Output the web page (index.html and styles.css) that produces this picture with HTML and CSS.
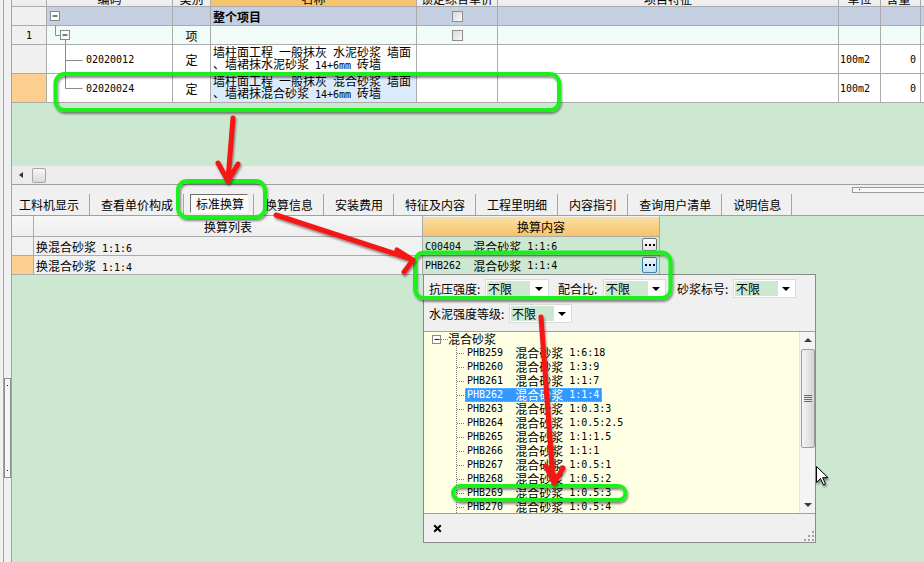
FILE: index.html
```html
<!DOCTYPE html>
<html lang="zh-CN">
<head>
<meta charset="utf-8">
<title>标准换算</title>
<link rel="stylesheet" href="styles.css">
</head>
<body>
<div class="app">
  <aside class="lstrip"><div class="lthumb"><i></i><i></i></div></aside>
  <div class="main">
    <section class="top">
      <div class="thead-clip">
        <div class="tr thead">
          <div class="c w-num"></div>
          <div class="c w-code">编码</div>
          <div class="c w-type">类别</div>
          <div class="c w-name hdr-or">名称</div>
          <div class="c w-lock">锁定综合单价</div>
          <div class="c w-feat">项目特征</div>
          <div class="c w-unit">单位</div>
          <div class="c w-qty">含量</div>
          <div class="c w-rest"></div>
        </div>
      </div>
      <div class="tr r1">
        <div class="c w-num gray"></div>
        <div class="c w-code"><svg width="20" height="18" viewBox="0 0 20 18"><rect class="mbox" x="3.5" y="4.5" width="9" height="9"/><path class="mminus" d="M5.5 9h5"/></svg></div>
        <div class="c w-type"></div>
        <div class="c w-name"><b>整个项目</b></div>
        <div class="c w-lock ctr"><span class="chk"></span></div>
        <div class="c w-feat"></div>
        <div class="c w-unit"></div>
        <div class="c w-qty"></div>
        <div class="c w-rest"></div>
      </div>
      <div class="tr r2">
        <div class="c w-num gray ctr"><span class="m">1</span></div>
        <div class="c w-code"><svg width="30" height="18" viewBox="0 0 30 18"><path class="tline" d="M8.5 0v9.5h5M18.5 14v4"/><rect class="mbox" x="13.5" y="4.5" width="9" height="9"/><path class="mminus" d="M15.5 9h5"/></svg></div>
        <div class="c w-type ctr">项</div>
        <div class="c w-name"></div>
        <div class="c w-lock ctr"><span class="chk"></span></div>
        <div class="c w-feat"></div>
        <div class="c w-unit"></div>
        <div class="c w-qty"></div>
        <div class="c w-rest"></div>
      </div>
      <div class="tr r3">
        <div class="c w-num gray"></div>
        <div class="c w-code"><svg width="39" height="28" viewBox="0 0 39 28"><path class="tline" d="M18.5 0v28M18.5 15.5h17"/></svg><span class="m">02020012</span></div>
        <div class="c w-type ctr">定</div>
        <div class="c w-name two"><span>墙柱面工程 一般抹灰 水泥砂浆 墙面</span><span>、墙裙抹水泥砂浆 <span class="m">14+6mm</span> 砖墙</span></div>
        <div class="c w-lock"></div>
        <div class="c w-feat"></div>
        <div class="c w-unit"><span class="m">100m2</span></div>
        <div class="c w-qty"><span class="m">0</span></div>
        <div class="c w-rest"></div>
      </div>
      <div class="tr r3">
        <div class="c w-num or"></div>
        <div class="c w-code"><svg width="39" height="28" viewBox="0 0 39 28"><path class="tline" d="M18.5 0v14.5h17"/></svg><span class="m">02020024</span></div>
        <div class="c w-type ctr">定</div>
        <div class="c w-name two hl"><span>墙柱面工程 一般抹灰 混合砂浆 墙面</span><span>、墙裙抹混合砂浆 <span class="m">14+6mm</span> 砖墙</span></div>
        <div class="c w-lock"></div>
        <div class="c w-feat"></div>
        <div class="c w-unit"><span class="m">100m2</span></div>
        <div class="c w-qty"><span class="m">0</span></div>
        <div class="c w-rest"></div>
      </div>
      <div class="fill"></div>
      <div class="hscroll"><i class="larr"></i><span class="hthumb"></span></div>
    </section>

    <nav class="tabbar">
      <span class="tab t1">工料机显示</span><i class="sep"></i>
      <span class="tab">查看单价构成</span><i class="sep"></i>
      <span class="tab on">标准换算</span><i class="sep"></i>
      <span class="tab">换算信息</span><i class="sep"></i>
      <span class="tab">安装费用</span><i class="sep"></i>
      <span class="tab">特征及内容</span><i class="sep"></i>
      <span class="tab">工程里明细</span><i class="sep"></i>
      <span class="tab">内容指引</span><i class="sep"></i>
      <span class="tab">查询用户清单</span><i class="sep"></i>
      <span class="tab">说明信息</span><i class="sep"></i>
      <span class="minibar"><i></i></span>
    </nav>

    <section class="bottom">
      <div class="lgrid">
        <div class="gr gh"><div class="gc gn"></div><div class="gc gt ctr">换算列表</div></div>
        <div class="gr"><div class="gc gn"></div><div class="gc gt"><span>换混合砂浆 <span class="m">1:1:6</span></span></div></div>
        <div class="gr"><div class="gc gn or"></div><div class="gc gt"><span>换混合砂浆 <span class="m">1:1:4</span></span></div></div>
      </div>
      <div class="rgrid">
        <div class="rh">换算内容</div>
        <div class="rr"><span class="m">C00404</span><span class="nm">混合砂浆</span><span class="m r6">1:1:6</span><span class="dots"><svg width="10" height="2" viewBox="0 0 10 2"><rect x="0" y="0" width="2" height="2"/><rect x="4" y="0" width="2" height="2"/><rect x="8" y="0" width="2" height="2"/></svg></span></div>
        <div class="rr"><span class="m">PHB262</span><span class="nm">混合砂浆</span><span class="m r6">1:1:4</span><span class="dots hot"><svg width="10" height="2" viewBox="0 0 10 2"><rect x="0" y="0" width="2" height="2"/><rect x="4" y="0" width="2" height="2"/><rect x="8" y="0" width="2" height="2"/></svg></span></div>
      </div>
    </section>
  </div>

  <div class="popup">
    <div class="filters">
      <div class="frow">
        <span class="lbl l1">抗压强度:</span><span class="sel w64"><span class="v">不限</span><span class="arr"></span></span>
        <span class="lbl l2">配合比:</span><span class="sel"><span class="v">不限</span><span class="arr"></span></span>
        <span class="lbl l3">砂浆标号:</span><span class="sel"><span class="v">不限</span><span class="arr"></span></span>
      </div>
      <div class="frow">
        <span class="lbl l4">水泥强度等级:</span><span class="sel"><span class="v">不限</span><span class="arr"></span></span>
      </div>
    </div>
    <div class="treebox">
      <div class="tree">
        <div class="tn"><svg width="24" height="14" viewBox="0 0 24 14"><rect class="mbox" x="8.5" y="3.5" width="8" height="8"/><path class="mminus2" d="M10.5 7.5h5"/><path class="dot" d="M17 7.5h7"/></svg>混合砂浆</div>
        <div class="tn"><svg width="41" height="14" viewBox="0 0 41 14"><path class="dot" d="M32.5 0v14M33 7.5h8"/></svg><span class="item"><span class="m">PHB259</span><span class="nm">混合砂浆</span><span class="m r6">1:6:18</span></span></div>
        <div class="tn"><svg width="41" height="14" viewBox="0 0 41 14"><path class="dot" d="M32.5 0v14M33 7.5h8"/></svg><span class="item"><span class="m">PHB260</span><span class="nm">混合砂浆</span><span class="m r6">1:3:9</span></span></div>
        <div class="tn"><svg width="41" height="14" viewBox="0 0 41 14"><path class="dot" d="M32.5 0v14M33 7.5h8"/></svg><span class="item"><span class="m">PHB261</span><span class="nm">混合砂浆</span><span class="m r6">1:1:7</span></span></div>
        <div class="tn"><svg width="41" height="14" viewBox="0 0 41 14"><path class="dot" d="M32.5 0v14M33 7.5h8"/></svg><span class="item cur"><span class="m">PHB262</span><span class="nm">混合砂浆</span><span class="m r6">1:1:4</span></span></div>
        <div class="tn"><svg width="41" height="14" viewBox="0 0 41 14"><path class="dot" d="M32.5 0v14M33 7.5h8"/></svg><span class="item"><span class="m">PHB263</span><span class="nm">混合砂浆</span><span class="m r6">1:0.3:3</span></span></div>
        <div class="tn"><svg width="41" height="14" viewBox="0 0 41 14"><path class="dot" d="M32.5 0v14M33 7.5h8"/></svg><span class="item"><span class="m">PHB264</span><span class="nm">混合砂浆</span><span class="m r6">1:0.5:2.5</span></span></div>
        <div class="tn"><svg width="41" height="14" viewBox="0 0 41 14"><path class="dot" d="M32.5 0v14M33 7.5h8"/></svg><span class="item"><span class="m">PHB265</span><span class="nm">混合砂浆</span><span class="m r6">1:1:1.5</span></span></div>
        <div class="tn"><svg width="41" height="14" viewBox="0 0 41 14"><path class="dot" d="M32.5 0v14M33 7.5h8"/></svg><span class="item"><span class="m">PHB266</span><span class="nm">混合砂浆</span><span class="m r6">1:1:1</span></span></div>
        <div class="tn"><svg width="41" height="14" viewBox="0 0 41 14"><path class="dot" d="M32.5 0v14M33 7.5h8"/></svg><span class="item"><span class="m">PHB267</span><span class="nm">混合砂浆</span><span class="m r6">1:0.5:1</span></span></div>
        <div class="tn"><svg width="41" height="14" viewBox="0 0 41 14"><path class="dot" d="M32.5 0v14M33 7.5h8"/></svg><span class="item"><span class="m">PHB268</span><span class="nm">混合砂浆</span><span class="m r6">1:0.5:2</span></span></div>
        <div class="tn"><svg width="41" height="14" viewBox="0 0 41 14"><path class="dot" d="M32.5 0v14M33 7.5h8"/></svg><span class="item"><span class="m">PHB269</span><span class="nm">混合砂浆</span><span class="m r6">1:0.5:3</span></span></div>
        <div class="tn"><svg width="41" height="14" viewBox="0 0 41 14"><path class="dot" d="M32.5 0v14M33 7.5h8"/></svg><span class="item"><span class="m">PHB270</span><span class="nm">混合砂浆</span><span class="m r6">1:0.5:4</span></span></div>
      </div>
      <div class="vscroll">
        <span class="vb up"></span>
        <span class="vthumb"><svg width="8" height="8" viewBox="0 0 8 8"><path d="M0 0.5h8M0 2.5h8M0 4.5h8M0 6.5h8" stroke="#6a6a6a" stroke-width="1"/></svg></span>
        <span class="vgap"></span>
        <span class="vb dn"></span>
      </div>
    </div>
    <div class="pfoot">
      <svg width="9" height="9" viewBox="0 0 9 9"><path d="M1.2 1.2L7.8 7.8M7.8 1.2L1.2 7.8" stroke="#000" stroke-width="2"/></svg>
      <svg class="grip" width="11" height="11" viewBox="0 0 11 11"><g fill="#a3a3a3"><rect x="9" y="1" width="2" height="2"/><rect x="9" y="5" width="2" height="2"/><rect x="5" y="5" width="2" height="2"/><rect x="9" y="9" width="2" height="2"/><rect x="5" y="9" width="2" height="2"/><rect x="1" y="9" width="2" height="2"/></g></svg>
    </div>
  </div>

  <svg class="overlay" width="924" height="562" viewBox="0 0 924 562">
    <defs>
      <filter id="sh" x="-20%" y="-20%" width="140%" height="160%">
        <feDropShadow dx="1" dy="2" stdDeviation="1.2" flood-color="#000" flood-opacity="0.45"/>
      </filter>
    </defs>
    <g fill="none" stroke="#1ef01e" stroke-width="4" filter="url(#sh)">
      <rect x="55.5" y="74" width="503.5" height="36" rx="9"/>
      <rect x="178" y="181" width="87" height="36" rx="9"/>
      <rect x="415" y="252.5" width="255.5" height="45.5" rx="9"/>
      <rect x="453" y="486" width="172.5" height="14" rx="7"/>
    </g>
    <g fill="none" stroke="#f51414" stroke-width="5" stroke-linecap="round" stroke-linejoin="round" filter="url(#sh)">
      <path d="M233 118L228 180M218 163L228 181L238 164"/>
      <path d="M276 215L411 259M397 250L413 260L404 272"/>
      <path d="M541 317L553 480M546 466L554 483L563 468"/>
    </g>
    <path d="M816.5 466.5V482.5L820.5 478.5L823.5 485L825.5 484L822.7 477.7H828Z" fill="#fff" stroke="#000" stroke-width="1" filter="url(#sh)"/>
  </svg>
</div>
</body>
</html>
```

FILE: styles.css
```css
* { box-sizing: border-box; }
html, body { margin: 0; padding: 0; }
body {
  width: 924px;
  height: 562px;
  overflow: hidden;
  background: #f0f0f0;
  font-family: "Noto Sans CJK SC", "Noto Sans", sans-serif;
  font-size: 12px;
  color: #000;
  word-spacing: 3.3px;
}
.m {
  font-family: "DejaVu Sans Mono", "Liberation Mono", monospace;
  font-size: 10px;
  word-spacing: 0;
}
.app { position: relative; display: flex; width: 924px; height: 562px; }

/* left strip */
.lstrip {
  flex: none;
  width: 9px;
  margin-left: 3px;
  border-left: 1px solid #a3a3a3;
  border-right: 1px solid #a3a3a3;
  background: #f0f0f0;
  display: flex;
  flex-direction: column;
}
.lthumb {
  margin-top: 378px;
  height: 100px;
  border: 1px solid #8d8d8d;
  background: #f5f5f5;
  display: flex;
  flex-direction: column;
  justify-content: space-between;
  align-items: center;
  padding: 6px 0;
}
.lthumb i { display: block; width: 1px; height: 1px; background: #00007a; }

.main { flex: 1; min-width: 0; display: flex; flex-direction: column; }

/* top grid */
.top {
  flex: none;
  height: 185px;
  display: flex;
  flex-direction: column;
  background: #cde8d0;
  border-bottom: 1px solid #a0a0a0;
}
.thead-clip {
  flex: none;
  height: 7px;
  overflow: hidden;
  display: flex;
  flex-direction: column;
  justify-content: flex-end;
}
.tr { display: flex; flex: none; }
.thead { height: 21px; background: linear-gradient(#fafafa, #ebebeb); }
.thead .c { justify-content: center; align-items: flex-end; line-height: 14px; padding-left: 0; }
.thead .hdr-or { background: #f6c46c; }
.c {
  flex: none;
  display: flex;
  align-items: center;
  border-right: 1px solid #ababab;
  border-bottom: 1px solid #ababab;
  white-space: nowrap;
  overflow: hidden;
}
.w-num { width: 35px; }
.w-code { width: 126px; }
.w-type { width: 38px; }
.w-name { width: 206px; padding-left: 2px; }
.w-lock { width: 81px; }
.w-feat { width: 341px; }
.w-unit { width: 42px; padding-left: 1px; }
.w-qty { width: 40px; justify-content: flex-end; padding-right: 4px; }
.w-rest { flex: 1; border-right: none; }
.r1 { height: 19px; background: #c4d0e1; }
.r2 { height: 19px; background: #f1fbf7; }
.r3 { height: 29px; background: #fff; }
.gray { background: #f0f0f0; }
.or { background: #fccf8e; }
.hl { background: #dcebfb; }
.ctr { justify-content: center; }
.two { flex-direction: column; align-items: flex-start; justify-content: center; line-height: 12px; }
.chk {
  display: block;
  width: 11px;
  height: 11px;
  border: 1px solid #8f8f8f;
  background: linear-gradient(135deg, #d8d8d8, #fafafa);
}
.c svg { flex: none; display: block; }
.tline { stroke: #8a8a8a; fill: none; }
.mbox { fill: #fbfbfb; stroke: #8a8a8a; }
.mminus { stroke: #000; fill: none; }
.mminus2 { stroke: #1a1a6a; fill: none; }
.fill { flex: 1; }
.hscroll {
  flex: none;
  height: 18px;
  background: #ececec;
  display: flex;
  align-items: center;
  padding-left: 7px;
}
.larr {
  display: block;
  width: 0;
  height: 0;
  border-top: 3px solid transparent;
  border-bottom: 3px solid transparent;
  border-right: 4px solid #333;
}
.hthumb {
  display: block;
  margin-left: 9px;
  width: 14px;
  height: 15px;
  border: 1px solid #a7a7a7;
  border-radius: 2px;
  background: linear-gradient(#f7f7f7, #dadada);
}

/* tabs */
.tabbar {
  flex: none;
  height: 30px;
  display: flex;
  align-items: flex-end;
  background: #f0f0f0;
}
.tab { flex: none; height: 21px; line-height: 21px; padding: 0 10px 0 11px; white-space: nowrap; }
.tab.t1 { padding-left: 7px; }
.tab.on {
  height: 19px;
  line-height: 17px;
  margin: 0 5px 2px 6px;
  padding: 0 3px 0 5px;
  border: 1px solid;
  border-color: #6f6f6f #ffffff #ffffff #6f6f6f;
  background: #fbfbfb;
}
.sep { flex: none; display: block; width: 1px; height: 21px; background: #a5a5a5; }
.minibar {
  align-self: flex-start;
  margin: 2px 0 0 auto;
  width: 72px;
  height: 6px;
  border: 1px solid #9a9a9a;
  border-right: none;
  background: #f7f7f7;
}
.minibar i { display: block; width: 1px; height: 1px; background: #333; margin: 1px 0 0 6px; }

/* bottom grids */
.bottom {
  flex: 1;
  display: flex;
  align-items: flex-start;
  background: #cde8d0;
  border-top: 1px solid #a0a0a0;
}
.lgrid { flex: none; width: 411px; background: #f1f1f1; }
.gr { display: flex; height: 19px; }
.gr.gh { height: 21px; background: linear-gradient(#f7f7f7, #ededed); }
.gc {
  display: flex;
  align-items: center;
  border-right: 1px solid #ababab;
  border-bottom: 1px solid #ababab;
  white-space: nowrap;
}
.gn { width: 22px; }
.gt { width: 389px; padding-left: 2px; }
.gt.ctr { justify-content: center; padding-left: 0; }
.rgrid { flex: none; width: 237px; }
.rh {
  height: 21px;
  border-top: 1px solid #f0f0f0;
  border-right: 1px solid #ababab;
  border-bottom: 1px solid #ababab;
  background: linear-gradient(#fbdfa6, #f5c46b);
  display: flex;
  align-items: center;
  justify-content: center;
}
.rr {
  height: 19px;
  display: flex;
  align-items: center;
  padding-left: 2px;
  border-right: 1px solid #ababab;
  border-bottom: 1px solid #ababab;
  white-space: nowrap;
}
.nm { margin-left: 12px; }
.r6 { margin-left: 6px; }
.dots {
  align-self: flex-start;
  margin: 1px 2px 0 auto;
  width: 15px;
  height: 13px;
  border: 1px solid #777;
  border-radius: 2px;
  background: linear-gradient(#fdfdfd, #e2e2e2);
  display: flex;
  align-items: center;
  justify-content: center;
}
.dots.hot {
  align-self: center;
  margin-top: 0;
  height: 16px;
  border-color: #3c7fb1;
  background: linear-gradient(#e8f5fd, #bde2fa);
}
.dots svg { display: block; fill: #000; }

/* popup */
.popup {
  position: absolute;
  left: 423px;
  top: 274px;
  width: 393px;
  height: 269px;
  border: 1px solid #8a8a8a;
  background: #f0f0f0;
  display: flex;
  flex-direction: column;
}
.filters { flex: none; height: 56px; padding: 4px 0 0 5px; }
.frow { display: flex; align-items: center; height: 19px; }
.frow + .frow { margin-top: 6px; }
.lbl { flex: none; line-height: 19px; white-space: nowrap; }
.l1 { width: 56px; }
.l2 { width: 45px; margin-left: 9px; }
.l3 { width: 56px; margin-left: 11px; }
.l4 { width: 80px; }
.sel {
  flex: none;
  width: 63px;
  height: 19px;
  display: flex;
  align-items: stretch;
  background: #fff;
  border: 1px solid #dadada;
  padding: 1px;
}
.sel.w64 { width: 64px; }
.sel .v { width: 43px; background: #cde8d0; line-height: 15px; padding-left: 1px; }
.sel .arr { flex: 1; display: flex; align-items: center; justify-content: center; }
.sel .arr::after {
  content: "";
  display: block;
  border-left: 4px solid transparent;
  border-right: 4px solid transparent;
  border-top: 4px solid #000;
}
.treebox { flex: none; height: 182px; border-top: 1px solid #a0a0a0; display: flex; }
.tree { flex: 1; background: #ffffe3; overflow: hidden; }
.tn { display: flex; align-items: center; height: 14px; white-space: nowrap; line-height: 12px; }
.tn svg { flex: none; display: block; }
.dot { stroke: #7d7d7d; stroke-dasharray: 1 1; fill: none; }
.item {
  display: flex;
  align-items: center;
  height: 14px;
  padding: 0 2px 0 1px;
  border: 1px dotted transparent;
}
.item.cur { background: #3399ff; color: #fff; border-color: #e8a24a; }
.vscroll {
  flex: none;
  width: 16px;
  background: #f4f4f4;
  border-left: 1px solid #e4e4e4;
  display: flex;
  flex-direction: column;
  align-items: center;
}
.vb { flex: none; height: 16px; width: 100%; display: flex; align-items: center; justify-content: center; }
.vb.up::after {
  content: "";
  display: block;
  border-left: 4px solid transparent;
  border-right: 4px solid transparent;
  border-bottom: 4px solid #3a3a3a;
}
.vb.dn::after {
  content: "";
  display: block;
  border-left: 4px solid transparent;
  border-right: 4px solid transparent;
  border-top: 4px solid #3a3a3a;
}
.vthumb {
  flex: none;
  margin-top: 1px;
  width: 14px;
  height: 99px;
  border: 1px solid #9c9c9c;
  border-radius: 2px;
  background: linear-gradient(90deg, #f4f4f4, #e4e4e4 55%, #d3d3d3);
  display: flex;
  align-items: center;
  justify-content: center;
}
.vthumb svg { display: block; }
.vgap { flex: 1; }
.pfoot {
  flex: none;
  height: 29px;
  border-top: 1px solid #a0a0a0;
  display: flex;
  align-items: center;
  padding-left: 9px;
  background: #f0f0f0;
}
.pfoot svg { display: block; flex: none; }
.grip { align-self: flex-end; margin: 0 1px 1px auto; }

.overlay { position: absolute; left: 0; top: 0; pointer-events: none; }
```
